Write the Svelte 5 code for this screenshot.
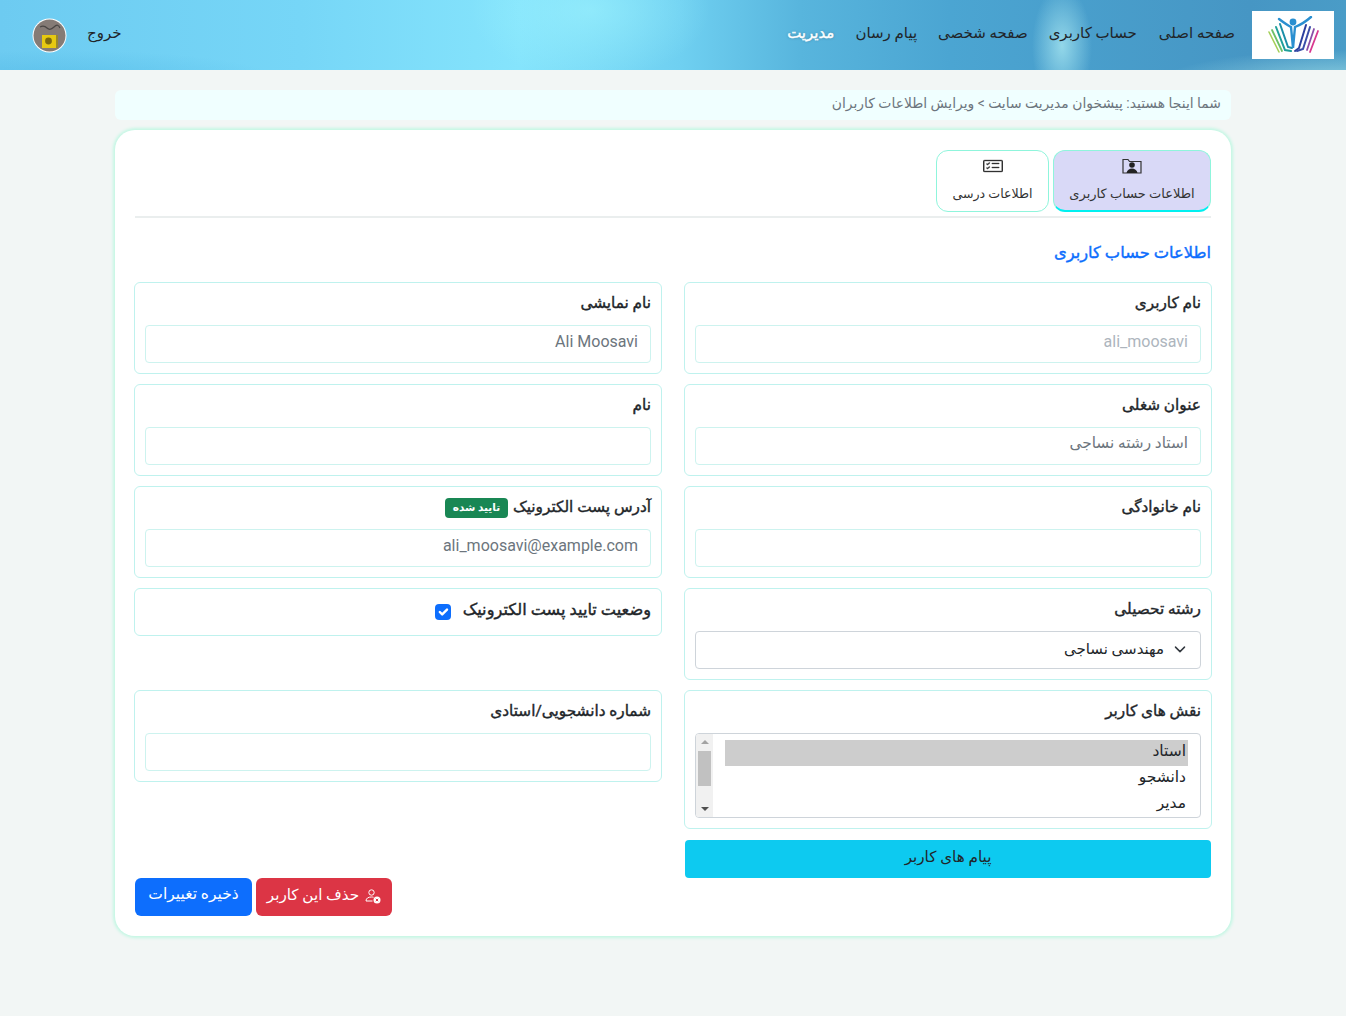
<script>
	const navItems = ['صفحه اصلی', 'حساب کاربری', 'صفحه شخصی', 'پیام رسان'];
	const roles = ['استاد', 'دانشجو', 'مدیر'];
</script>

<div class="page" dir="rtl">
	<header class="topbar">
		<div class="logo">
			<svg width="56" height="38" viewBox="0 0 56 38" fill="none" stroke-linecap="round">
				<path d="M4 16 L14 36" stroke="#a5cf5a" stroke-width="1.6" />
				<path d="M7 14 L17 35" stroke="#6cc06a" stroke-width="1.8" />
				<path d="M11 11 L20 34 L26 35" stroke="#1f9f9a" stroke-width="2" />
				<path d="M15 8 L23 31 L27 32" stroke="#1b8fa8" stroke-width="2" />
				<circle cx="28" cy="6" r="3.4" fill="#2a8fd0" />
				<path d="M14 3 Q22 9 26 11 L28 32 L30 11 Q38 8 46 1" stroke="#2a8fd0" stroke-width="2.4" />
				<path d="M41 9 L34 32 L30 35" stroke="#2b3f9e" stroke-width="2" />
				<path d="M45 11 L38 33 L32 35" stroke="#3a4ea8" stroke-width="2" />
				<path d="M49 13 L42 34" stroke="#8b4fa8" stroke-width="1.8" />
				<path d="M53 15 L45 36" stroke="#d8388f" stroke-width="1.8" />
			</svg>
		</div>
		<nav class="mainnav">
			{#each navItems as item}
				<a href="#top">{item}</a>
			{/each}
			<a href="#top" class="active">مدیریت</a>
		</nav>
		<div class="userbox">
			<a href="#top" class="logout">خروج</a>
			<svg class="avatar" width="35" height="35" viewBox="0 0 35 35">
				<circle cx="17.5" cy="17.5" r="17" fill="#fff" />
				<circle cx="17.5" cy="17.5" r="16" fill="#857b76" />
				<path d="M8 9 Q12 7 15 10 T22 9 T28 10" stroke="#4a4644" stroke-width="1.2" fill="none" />
				<rect x="10" y="17" width="14" height="13" fill="#e7c911" />
				<rect x="24" y="17" width="2" height="13" fill="#9a8a2a" />
				<circle cx="16.5" cy="23" r="3.4" fill="#7c6a10" />
			</svg>
		</div>
	</header>

	<main class="content">
		<div class="crumbs">شما اینجا هستید: پیشخوان مدیریت سایت &gt; ویرایش اطلاعات کاربران</div>

		<section class="card">
			<div class="tabs">
				<button class="tab active">
					<svg width="20" height="16" viewBox="0 0 20 16" fill="none">
						<path d="M1 15V1.5h5l1.5 2H19V15Z" stroke="#333" stroke-width="1.2" />
						<circle cx="10" cy="7" r="2.8" fill="#222" />
						<path d="M4.5 15c.5-3 3-4.5 5.5-4.5s5 1.5 5.500 4.500Z" fill="#222" />
					</svg>
					<span>اطلاعات حساب کاربری</span>
				</button>
				<button class="tab second">
					<svg width="20" height="16" viewBox="0 0 16 16" preserveAspectRatio="none" fill="#333" stroke="#333" stroke-width=".3">
						<path d="M14.500 3a.5.5 0 0 1 .5.5v9a.5.5 0 0 1-.5.5h-13a.5.5 0 0 1-.5-.5v-9a.5.5 0 0 1 .5-.5h13zm-13-1A1.500 1.500 0 0 0 0 3.500v9A1.500 1.500 0 0 0 1.500 14h13a1.500 1.500 0 0 0 1.500-1.500v-9A1.500 1.500 0 0 0 14.500 2h-13z" />
						<path d="M7 5.500a.5.5 0 0 1 .5-.5h5a.5.5 0 0 1 0 1h-5a.5.5 0 0 1-.5-.5zm-1.496-.854a.5.5 0 0 1 0 .708l-1.500 1.500a.5.5 0 0 1-.708 0l-.5-.5a.5.5 0 1 1 .708-.708l.146.147 1.146-1.147a.5.5 0 0 1 .708 0zM7 9.500a.5.5 0 0 1 .5-.5h5a.5.5 0 0 1 0 1h-5a.5.5 0 0 1-.5-.5zm-1.496-.854a.5.5 0 0 1 0 .708l-1.500 1.500a.5.5 0 0 1-.708 0l-.5-.5a.5.5 0 0 1 .708-.708l.146.147 1.146-1.147a.5.5 0 0 1 .708 0z" />
					</svg>
					<span>اطلاعات درسی</span>
				</button>
			</div>

			<h2 class="title">اطلاعات حساب کاربری</h2>

			<div class="grid">
				<div class="field">
					<label for="username">نام کاربری</label>
					<input id="username" class="muted" value="ali_moosavi" dir="ltr" disabled />
				</div>
				<div class="field">
					<label for="display">نام نمایشی</label>
					<input id="display" value="Ali Moosavi" dir="ltr" />
				</div>
				<div class="field">
					<label for="job">عنوان شغلی</label>
					<input id="job" class="fa" value="استاد رشته نساجی" />
				</div>
				<div class="field">
					<label for="first">نام</label>
					<input id="first" />
				</div>
				<div class="field">
					<label for="last">نام خانوادگی</label>
					<input id="last" />
				</div>
				<div class="field">
					<label for="email">آدرس پست الکترونیک <span class="badge">تایید شده</span></label>
					<input id="email" value="ali_moosavi@example.com" dir="ltr" />
				</div>
				<div class="field">
					<label for="major">رشته تحصیلی</label>
					<div class="selectbox" id="major">
						<svg width="16" height="16" viewBox="0 0 16 16" fill="none">
							<path d="M2 5l6 6 6-6" stroke="#343a40" stroke-width="2" stroke-linecap="round" stroke-linejoin="round" transform="translate(2 2.400) scale(.75)" />
						</svg>
						<span>مهندسی نساجی</span>
					</div>
				</div>
				<div class="field check">
					<label for="verified">وضعیت تایید پست الکترونیک</label>
					<span class="checkbox" id="verified">
						<svg width="16" height="16" viewBox="0 0 20 20" fill="none">
							<path d="M6 10l3 3 6-6" stroke="#fff" stroke-width="3" stroke-linecap="round" stroke-linejoin="round" />
						</svg>
					</span>
				</div>
				<div class="stack">
					<div class="field">
						<label for="roles">نقش های کاربر</label>
						<div class="listbox" id="roles">
							<div class="options">
								{#each roles as role, i}
									<div class="option" class:selected={i === 0}><span>{role}</span></div>
								{/each}
							</div>
							<div class="scrollbar">
								<span class="arrow up"></span>
								<span class="thumb"></span>
								<span class="arrow down"></span>
							</div>
						</div>
					</div>
					<button class="btn info"><span>پیام های کاربر</span></button>
				</div>
				<div class="field">
					<label for="student">شماره دانشجویی/استادی</label>
					<input id="student" />
				</div>
			</div>

			<div class="actions">
				<button class="btn danger">
					<svg width="16" height="16" viewBox="0 0 16 16" fill="none" stroke="#fff" stroke-width="1">
						<circle cx="6.500" cy="4.500" r="2.700" />
						<path d="M1 13c0-3 2.500-4 5.500-4 .8 0 1.500.1 2 .3M1 13h6.500" />
						<circle cx="12" cy="12" r="3.500" fill="#fff" stroke="none" />
						<path d="M10.800 10.800l2.400 2.400m0-2.400l-2.400 2.400" stroke="#dc3545" />
					</svg>
					<span>حذف این کاربر</span>
				</button>
				<button class="btn primary"><span>ذخیره تغییرات</span></button>
			</div>
		</section>
	</main>
</div>

<style>
	:global(body) {
		margin: 0;
		background: #f2f6f5;
	}
	.page {
		min-height: 1016px;
		font-family: Roboto, "DejaVu Sans", sans-serif;
		font-size: 16px;
		line-height: 1.5;
		color: #212529;
		background: #f2f6f5;
	}
	.topbar {
		height: 70px;
		box-sizing: border-box;
		display: flex;
		align-items: center;
		padding: 0 12px;
		background:
			radial-gradient(ellipse 30px 60px at 1062px 46px, rgba(160, 225, 238, 0.85), transparent),
			radial-gradient(ellipse 190px 34px at 1346px 84px, rgba(170, 230, 235, 0.75), transparent),
			radial-gradient(ellipse 120px 70px at 590px 10px, rgba(160, 245, 255, 0.55), transparent),
			radial-gradient(ellipse 220px 30px at 60px 80px, rgba(60, 170, 220, 0.35), transparent),
			linear-gradient(90deg, #6dcbf1 0, #76d6f7 300px, #85e4fc 520px, #6fd0f1 680px, #58b5dd 800px, #4ba5d2 950px, #4696c4 1250px, #4a9cc7 1346px);
	}
	.logo {
		width: 82px;
		height: 48px;
		background: #fff;
		display: flex;
		align-items: center;
		justify-content: center;
	}
	.mainnav {
		display: flex;
		gap: 21px;
		margin-right: 17px;
		font-size: 15px;
		padding-bottom: 3px;
	}
	.mainnav a {
		color: #212529;
		text-decoration: none;
	}
	.mainnav a:first-child {
		margin-left: 1px;
	}
	.mainnav a.active {
		color: #fff;
		-webkit-text-stroke: 0.4px #fff;
		text-shadow: 0 0 3px rgba(0, 0, 0, 0.3);
	}
	.userbox {
		margin-right: auto;
		display: flex;
		align-items: center;
		gap: 20px;
		padding-left: 20px;
	}
	.logout {
		color: #212529;
		text-decoration: none;
		font-size: 15px;
		padding-bottom: 4px;
	}
	.content {
		width: 1116px;
		margin: 20px auto 0;
	}
	.crumbs {
		height: 30px;
		box-sizing: border-box;
		padding: 3px 10px;
		font-size: 13.9px;
		color: #6c757d;
		background: #f0ffff;
		border-radius: 6px;
	}
	.card {
		margin-top: 10px;
		padding: 20px;
		background: #fff;
		border-radius: 20px;
		box-shadow: 0 0 3px 2px #c4f7e4;
		box-sizing: border-box;
		height: 806px;
	}
	.tabs {
		display: flex;
		gap: 4px;
		height: 66px;
		border-bottom: 2px solid #eaeeee;
	}
	.tab {
		width: 158px;
		height: 62px;
		box-sizing: border-box;
		padding: 7px 0 0;
		font: inherit;
		font-size: 13px;
		color: #333;
		background: #fff;
		border: 1px solid #8ff5dc;
		border-radius: 12px;
		display: flex;
		flex-direction: column;
		align-items: center;
		gap: 10px;
	}
	.tab.second {
		width: 113px;
		font-size: 12.6px;
		gap: 11px;
	}
	.tab.active {
		background: #d9d9f7;
		border-bottom: 2px solid #00f0f0;
	}
	.title {
		margin: 23px 0 17px;
		font-size: 16.3px;
		font-weight: 400;
		-webkit-text-stroke: 0.4px #0d6efd;
		line-height: 24px;
		color: #0d6efd;
	}
	.grid {
		display: grid;
		grid-template-columns: 528px 528px;
		gap: 10px 22px;
		align-items: start;
		margin: 0 -1px;
	}
	.stack {
		display: flex;
		flex-direction: column;
		gap: 11px;
	}
	.field {
		border: 1px solid #bff2ee;
		border-radius: 6px;
		padding: 10px;
	}
	.field label {
		display: block;
		margin: -2px 0 10px;
		font-size: 15.3px;
		-webkit-text-stroke: 0.4px #212529;
		line-height: 24px;
		color: #212529;
	}
	.field input {
		display: block;
		width: 100%;
		height: 38px;
		box-sizing: border-box;
		padding: 0 12px 6px;
		font: inherit;
		color: #6c757d;
		background: #fff;
		border: 1px solid #cdf3ef;
		border-radius: 4px;
		outline: none;
		text-align: right;
	}
	.field input.muted {
		color: #adb5bd;
	}
	.field input.fa {
		font-size: 15.3px;
	}
	.badge {
		display: inline-block;
		padding: 0 8px;
		margin-right: 1px;
		font-size: 10.5px;
		-webkit-text-stroke: 0;
		font-weight: 700;
		line-height: 20px;
		color: #fff;
		background: #198754;
		border-radius: 4px;
		vertical-align: middle;
	}
	.selectbox {
		height: 38px;
		box-sizing: border-box;
		padding: 0 12px 2px;
		display: flex;
		align-items: center;
		gap: 8px;
		font-size: 15px;
		border: 1px solid #ced4da;
		border-radius: 4px;
	}
	.field.check {
		display: flex;
		align-items: center;
		gap: 12px;
		height: 48px;
		box-sizing: border-box;
	}
	.field.check label {
		margin: -5px 0 0;
		font-size: 16.2px;
	}
	.checkbox {
		width: 16px;
		height: 16px;
		background: #0d6efd;
		border-radius: 4px;
		display: flex;
	}
	.listbox {
		height: 85px;
		box-sizing: border-box;
		display: flex;
		border: 1px solid #ced4da;
		border-radius: 4px;
		overflow: hidden;
	}
	.options {
		flex: 1;
		padding: 6px 12px 0;
	}
	.option {
		height: 26px;
		line-height: 22px;
		padding: 0 2px 4px;
		box-sizing: border-box;
		font-size: 15.5px;
	}
	.option.selected {
		background: #cdcdcd;
	}
	.scrollbar {
		width: 17px;
		background: #f1f1f1;
		position: relative;
	}
	.thumb {
		position: absolute;
		top: 17px;
		left: 2px;
		width: 13px;
		height: 35px;
		background: #c1c1c1;
	}
	.arrow {
		position: absolute;
		left: 5px;
		width: 0;
		height: 0;
		border-left: 4px solid transparent;
		border-right: 4px solid transparent;
	}
	.arrow.up {
		top: 6px;
		border-bottom: 4px solid #a3a3a3;
	}
	.arrow.down {
		bottom: 6px;
		border-top: 4px solid #505050;
	}
	.btn {
		height: 38px;
		padding: 0 12px 4px;
		font: inherit;
		font-size: 15.2px;
		border: 1px solid transparent;
		border-radius: 6px;
		display: inline-flex;
		align-items: center;
		justify-content: center;
		gap: 6px;
	}
	.btn svg {
		margin-top: 2px;
	}
	.btn.info {
		margin: 0 1px;
		color: #212529;
		background: #0dcaf0;
		border-radius: 4px;
	}
	.btn.danger {
		width: 136px;
		padding: 0 0 4px;
		color: #fff;
		background: #dc3545;
	}
	.btn.primary {
		width: 117px;
		padding: 0 0 4px;
		font-size: 15.5px;
		color: #fff;
		background: #0d6efd;
	}
	.actions {
		display: flex;
		justify-content: flex-end;
		gap: 4px;
	}
</style>
